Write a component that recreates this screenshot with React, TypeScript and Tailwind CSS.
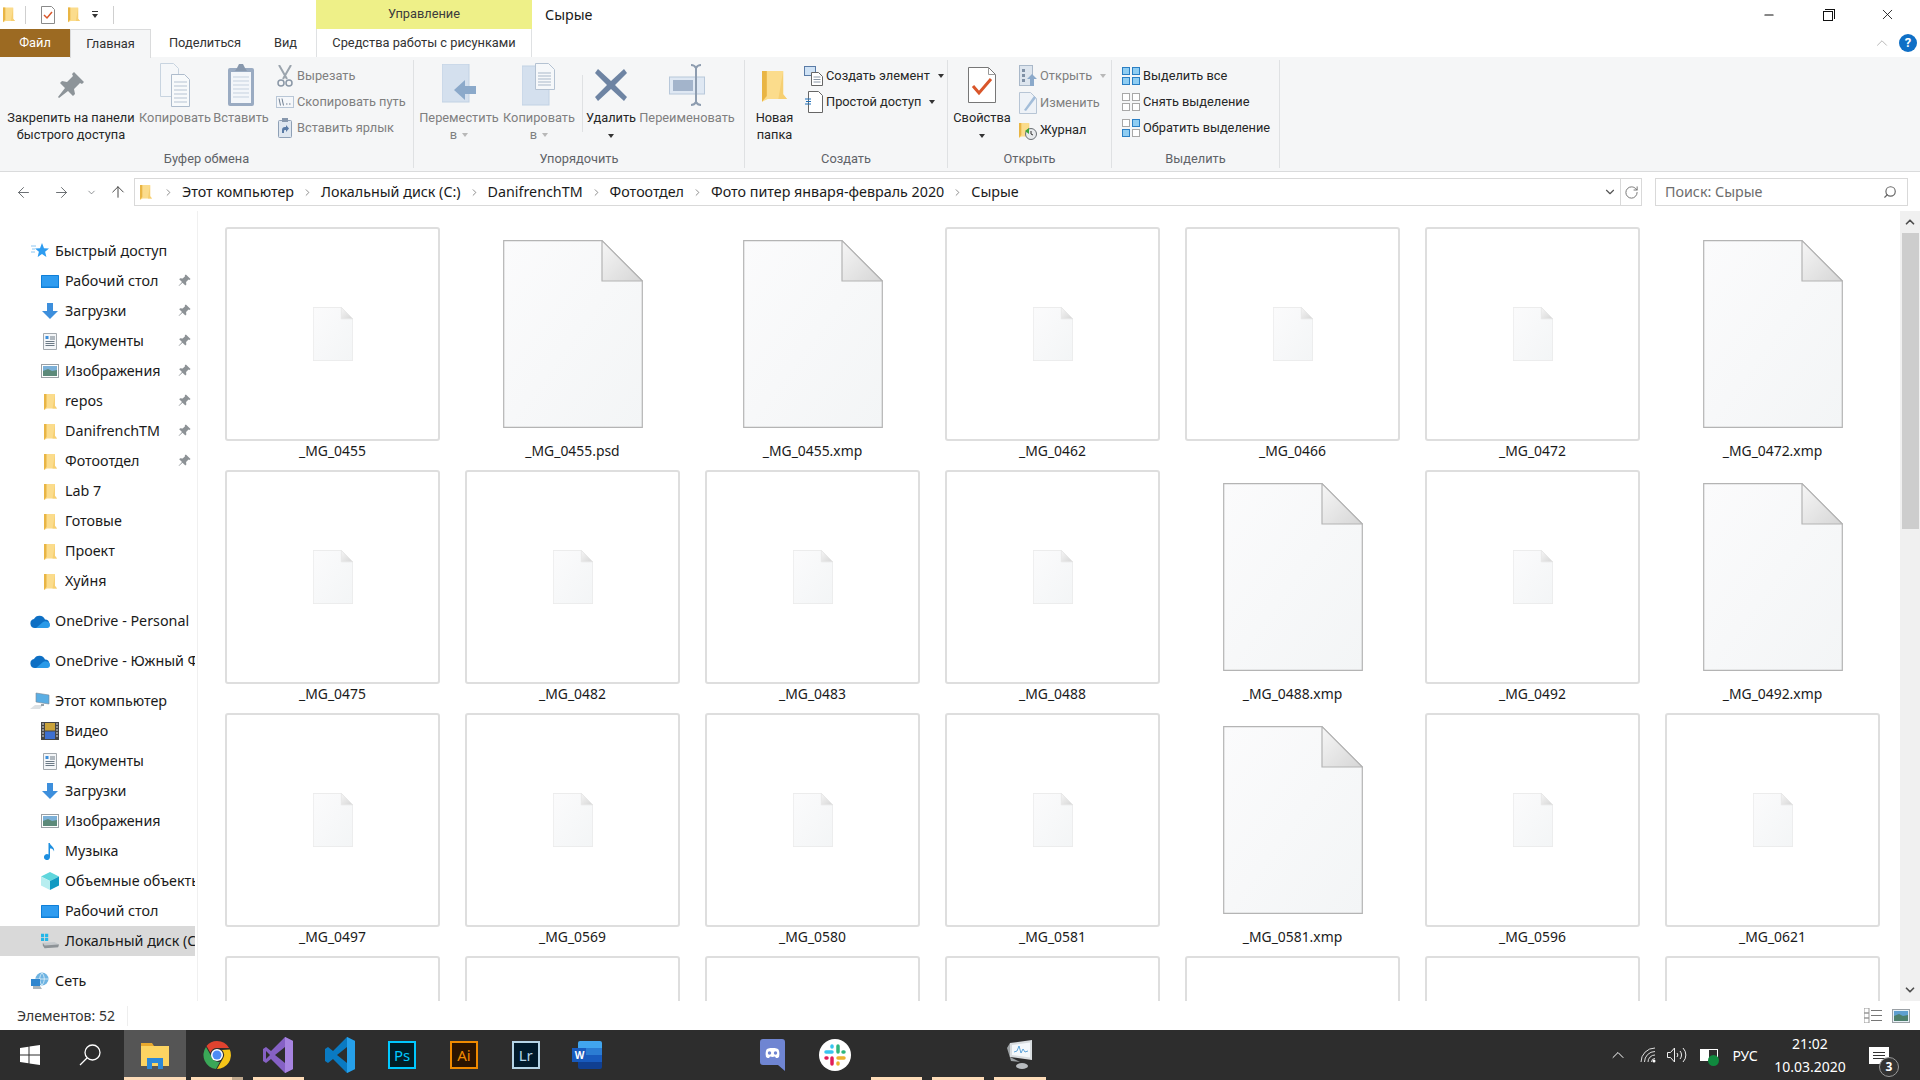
import { ArrowLeft, ArrowRight, ArrowUp, ChevronDown, ChevronRight, ChevronUp, RotateCw, Search, Minus, X } from 'lucide-react'
import type { ReactNode } from 'react'

type Tile = { name: string; big?: boolean }

const tiles: Tile[] = [
  { name: '_MG_0455' },
  { name: '_MG_0455.psd', big: true },
  { name: '_MG_0455.xmp', big: true },
  { name: '_MG_0462' },
  { name: '_MG_0466' },
  { name: '_MG_0472' },
  { name: '_MG_0472.xmp', big: true },
  { name: '_MG_0475' },
  { name: '_MG_0482' },
  { name: '_MG_0483' },
  { name: '_MG_0488' },
  { name: '_MG_0488.xmp', big: true },
  { name: '_MG_0492' },
  { name: '_MG_0492.xmp', big: true },
  { name: '_MG_0497' },
  { name: '_MG_0569' },
  { name: '_MG_0580' },
  { name: '_MG_0581' },
  { name: '_MG_0581.xmp', big: true },
  { name: '_MG_0596' },
  { name: '_MG_0621' },
  { name: '_MG_0630' },
  { name: '_MG_0631' },
  { name: '_MG_0632' },
  { name: '_MG_0633' },
  { name: '_MG_0634' },
  { name: '_MG_0635' },
  { name: '_MG_0636' },
]

function Folder({ className = 'w-[13px] h-[17px]' }: { className?: string }) {
  return (
    <svg viewBox="0 0 13 17" className={className}>
      <path d="M0 1h11v12l2 2.5H3L0 17z" fill="#fbdc8c" />
      <path d="M0 1h2.5v13L0 17z" fill="#e9b544" />
      <path d="M11 1v12l2 2.5H8.5z" fill="#f6cf72" />
    </svg>
  )
}

function PinMark() {
  return (
    <svg viewBox="0 0 14 14" className="h-[13px] w-[13px]">
      <path d="M8.5 0.5l5 5-1.2 1-1-.5-2.6 2.6.3 2.6-1.1 1.1-3-3L1 13l-.4-.4 3.7-3.9-3-3L2.4 4.6l2.6.3L7.6 2.3l-.3-.9z" fill="#8d9296" />
    </svg>
  )
}

const Desktop = () => (
  <svg viewBox="0 0 18 13" className="h-[13px] w-[18px]">
    <rect width="18" height="13" rx="0.5" fill="#0f7fd8" />
    <rect x="1" y="1" width="16" height="10.5" fill="#2f9cf0" />
  </svg>
)
const Down = () => (
  <svg viewBox="0 0 16 16" className="h-[16px] w-[16px]">
    <path d="M5 0h6v8h5l-8 8-8-8h5z" fill="#3d8fdc" />
  </svg>
)
const Doc = () => (
  <svg viewBox="0 0 14 17" className="h-[17px] w-[14px]">
    <path d="M.5.5h13v16H.5z" fill="#f4f6f8" stroke="#a3a9ae" />
    <path d="M2.5 3h3v3h-3z" fill="#3d8fdc" />
    <path d="M7 4h5M7 6h5M2.5 8.5h9M2.5 10.5h9M2.5 12.5h9" stroke="#6c7a86" />
  </svg>
)
const Pics = () => (
  <svg viewBox="0 0 18 14" className="h-[14px] w-[18px]">
    <rect x=".5" y=".5" width="17" height="13" fill="#fff" stroke="#9aa0a5" />
    <rect x="2" y="2" width="14" height="5" fill="#7bb0d8" />
    <path d="M2 7l5-2 4 2 5-1v6H2z" fill="#5d8a7a" />
  </svg>
)
const Cloud = () => (
  <svg viewBox="0 0 20 13" className="h-[13px] w-[20px]">
    <path d="M5 13a4.5 4.5 0 0 1-1-8.9A6 6 0 0 1 15 4.5 4.3 4.3 0 0 1 16 13z" fill="#0d6fc4" />
    <path d="M6 13l7-6c2-1.500 7-.5 7 3a3 3 0 0 1-3 3z" fill="#2a9ae8" />
  </svg>
)
const Pc = () => (
  <svg viewBox="0 0 20 18" className="h-[18px] w-[20px]">
    <path d="M6 1l13 2v9L6 10z" fill="#5aaee4" stroke="#7a8894" strokeWidth=".6" />
    <path d="M0 17l5-4h8l-3 4z" fill="#dde1e4" />
    <path d="M11 12h3v2h-3z" fill="#9aa4ab" />
  </svg>
)
const Video = () => (
  <svg viewBox="0 0 18 18" className="h-[18px] w-[18px]">
    <rect width="18" height="18" fill="#444" />
    <rect x="4" y="1" width="10" height="7.500" fill="#c9a23a" />
    <rect x="4" y="9.500" width="10" height="7.500" fill="#3d6fd0" />
    <path d="M1 2h2M1 5h2M1 8h2M1 11h2M1 14h2M15 2h2M15 5h2M15 8h2M15 11h2M15 14h2" stroke="#ddd" strokeWidth="1.200" />
  </svg>
)
const Music = () => (
  <svg viewBox="0 0 12 17" className="h-[17px] w-[12px]">
    <path d="M4.500 0h1.300c.5 3 5.200 4 4.200 8.500C9.500 6 7.500 5.500 6 5.500V14a3 3 0 1 1-1.500-2.500z" fill="#1d8fe0" />
  </svg>
)
const Cube = () => (
  <svg viewBox="0 0 18 18" className="h-[18px] w-[18px]">
    <path d="M9 0l9 4.500-9 4.500L0 4.500z" fill="#5fd6dc" />
    <path d="M0 4.500L9 9v9l-9-4.500z" fill="#b7eef0" />
    <path d="M18 4.500L9 9v9l9-4.500z" fill="#129ac2" />
  </svg>
)
const Disk = () => (
  <svg viewBox="0 0 20 16" className="h-[16px] w-[20px]">
    <path d="M0 0h3.500v3.500H0zM4.500 0H8v3.500H4.500zM0 4.500h3.500V8H0zM4.500 4.500H8V8H4.500z" fill="#22b6e8" />
    <path d="M2 10l13-1 5 3-1 3-15 1z" fill="#c5c9cc" />
    <path d="M2 10l2 3 15-1 1 0-1 3-15 1-2-3z" fill="#8d9296" />
  </svg>
)
const Net = () => (
  <svg viewBox="0 0 18 18" className="h-[18px] w-[18px]">
    <circle cx="11" cy="7" r="6.500" fill="#6fb4e2" />
    <path d="M5 7h12M11 1c-3 3-3 9 0 12M11 1c3 3 3 9 0 12" stroke="#e5f2fa" strokeWidth=".8" fill="none" />
    <rect x="0" y="7" width="9" height="7" fill="#2f86cf" />
    <path d="M2 14h7l2 3H2z" fill="#a9b4bb" />
  </svg>
)
const Star = () => (
  <svg viewBox="0 0 18 16" className="h-[16px] w-[18px]">
    <path d="M11 0l2 5.200 5 .3-3.900 3.300 1.300 5.200-4.400-3-4.400 3 1.300-5.200L4 5.500l5-.3z" fill="#2d9cf0" />
    <path d="M0 3h5M1 6h3M0 9h4" stroke="#8cc6f2" strokeWidth="1" />
  </svg>
)

function NavRow({ icon, label, pin, child, selected }: { icon: ReactNode; label: string; pin?: boolean; child?: boolean; selected?: boolean }) {
  return (
    <div className={`relative flex h-[30px] w-[195px] items-center overflow-hidden whitespace-nowrap text-[#1a1a1a] ${selected ? 'bg-[#d9d9d9]' : ''} ${child ? 'pl-[41px]' : 'pl-[30px]'}`}>
      <span className={`flex h-[18px] shrink-0 items-center justify-center ${child ? 'w-[18px] mr-[6px]' : 'w-[20px] mr-[5px]'}`}>{icon}</span>
      {label}
      {pin && (
        <span className="absolute right-[4px] top-[8px]">
          <PinMark />
        </span>
      )}
    </div>
  )
}

function Sidebar() {
  return (
    <aside className="w-[198px] shrink-0 overflow-hidden border-r border-[#f0f0f0] pt-[25px] text-[14.3px]">
      <NavRow icon={<Star />} label="Быстрый доступ" />
      <NavRow child pin icon={<Desktop />} label="Рабочий стол" />
      <NavRow child pin icon={<Down />} label="Загрузки" />
      <NavRow child pin icon={<Doc />} label="Документы" />
      <NavRow child pin icon={<Pics />} label="Изображения" />
      <NavRow child pin icon={<Folder />} label="repos" />
      <NavRow child pin icon={<Folder />} label="DanifrenchTM" />
      <NavRow child pin icon={<Folder />} label="Фотоотдел" />
      <NavRow child icon={<Folder />} label="Lab 7" />
      <NavRow child icon={<Folder />} label="Готовые" />
      <NavRow child icon={<Folder />} label="Проект" />
      <NavRow child icon={<Folder />} label="Хуйня" />
      <div className="mt-[10px]">
        <NavRow icon={<Cloud />} label="OneDrive - Personal" />
      </div>
      <div className="mt-[10px]">
        <NavRow icon={<Cloud />} label="OneDrive - Южный Федеральный" />
      </div>
      <div className="mt-[10px]">
        <NavRow icon={<Pc />} label="Этот компьютер" />
        <NavRow child icon={<Video />} label="Видео" />
        <NavRow child icon={<Doc />} label="Документы" />
        <NavRow child icon={<Down />} label="Загрузки" />
        <NavRow child icon={<Pics />} label="Изображения" />
        <NavRow child icon={<Music />} label="Музыка" />
        <NavRow child icon={<Cube />} label="Объемные объекты" />
        <NavRow child icon={<Desktop />} label="Рабочий стол" />
        <NavRow child selected icon={<Disk />} label="Локальный диск (C:)" />
      </div>
      <div className="mt-[10px]">
        <NavRow icon={<Net />} label="Сеть" />
      </div>
    </aside>
  )
}

function FileGlyph({ big }: { big?: boolean }) {
  const stroke = big ? '#b4b4b4' : '#e6e6e6'
  return (
    <svg viewBox="0 0 140 188" className={big ? 'h-[188px] w-[140px]' : 'h-[54px] w-[40px]'}>
      <defs>
        <linearGradient id="sheet" x1="0" y1="0" x2="1" y2="1">
          <stop offset="0" stopColor="#fbfbfc" />
          <stop offset="1" stopColor="#f3f5f6" />
        </linearGradient>
        <linearGradient id="fold" x1="0" y1="0" x2="1" y2="1">
          <stop offset="0" stopColor="#f6f6f6" />
          <stop offset="1" stopColor="#d6d6d6" />
        </linearGradient>
      </defs>
      <path d="M.7.7H99L139.300 41V187.300H.7z" fill="url(#sheet)" stroke={stroke} strokeWidth={big ? 1.2 : 3} />
      <path d="M99 .7V41H139.300z" fill="url(#fold)" stroke={stroke} strokeWidth={big ? 1.2 : 3} />
    </svg>
  )
}

function FileTile({ name, big }: Tile) {
  return (
    <div className="h-[243px] w-[215px]">
      <div className={`flex h-[214px] w-[215px] items-center justify-center rounded-[3px] ${big ? '' : 'border-2 border-[#dedede]'}`}>
        <FileGlyph big={big} />
      </div>
      <div className="text-center text-[13.9px] leading-[20px] text-[#1a1a1a]">{name}</div>
    </div>
  )
}

function Scrollbar() {
  return (
    <div className="flex w-[20px] shrink-0 flex-col bg-[#f0f0f0]">
      <div className="flex h-[22px] items-center justify-center text-[#505050]">
        <ChevronUp size={14} strokeWidth={3} />
      </div>
      <div className="h-[296px] w-[17px] self-center bg-[#cdcdcd]" />
      <div className="flex-1" />
      <div className="flex h-[22px] items-center justify-center text-[#505050]">
        <ChevronDown size={14} strokeWidth={3} />
      </div>
    </div>
  )
}

function Caret({ muted, className = '' }: { muted?: boolean; className?: string }) {
  return <span className={`inline-block h-0 w-0 border-x-[3.500px] border-t-[4px] border-x-transparent ${muted ? 'border-t-[#b8b8b8]' : 'border-t-[#333]'} ${className}`} />
}

function BigBtn({ w, icon, lines, muted, arrow, inlineArrow }: { w: string; icon: ReactNode; lines: string[]; muted?: boolean; arrow?: boolean; inlineArrow?: boolean }) {
  return (
    <div className={`${w} flex shrink-0 flex-col items-center pt-[4px] leading-[17px] ${muted ? 'text-[#7f7f7f]' : 'text-[#262626]'}`}>
      <div className="flex h-[48px] shrink-0 items-center justify-center">{icon}</div>
      {lines.map((l, i) => (
        <div key={l} className="flex items-center whitespace-nowrap">
          {l}
          {inlineArrow && i === lines.length - 1 && <Caret muted={muted} className="ml-[5px]" />}
        </div>
      ))}
      {arrow && <Caret muted={muted} className="mt-[8px]" />}
    </div>
  )
}

function SmallRow({ icon, label, muted, caret, h = 'h-[26px]' }: { icon: ReactNode; label: string; muted?: boolean; caret?: boolean; h?: string }) {
  return (
    <div className={`flex ${h} items-center gap-[3px] whitespace-nowrap ${muted ? 'text-[#7f7f7f]' : 'text-[#262626]'}`}>
      <span className="flex h-[22px] w-[19px] shrink-0 items-center justify-center">{icon}</span>
      {label}
      {caret && <Caret muted={muted} className="ml-[5px]" />}
    </div>
  )
}

function Group({ w, label, children }: { w: string; label: string; children: ReactNode }) {
  return (
    <section className={`${w} my-[3px] flex shrink-0 flex-col border-r border-[#dfe1e3]`}>
      <div className="-mt-[3px] flex h-[95px]">{children}</div>
      <div className="text-center leading-[18px] text-[#5f6368]">{label}</div>
    </section>
  )
}

const SelectGrid = ({ on }: { on: boolean[] }) => (
  <svg viewBox="0 0 18 18" className="h-[18px] w-[18px]">
    {[
      [0, 0],
      [10, 0],
      [0, 10],
      [10, 10],
    ].map(([x, y], i) => (
      <rect key={i} x={x + 0.5} y={y + 0.5} width="7" height="7" fill={on[i] ? '#8fcdf2' : '#fff'} stroke={on[i] ? '#2a7fc4' : '#a8a8a8'} />
    ))}
  </svg>
)

function Ribbon() {
  return (
    <div className="flex h-[115px] border-b border-[#dadbdc] bg-[#f5f6f7] font-['Roboto',sans-serif] text-[12.8px]">
      <Group w="w-[414px]" label="Буфер обмена">
        <div className="w-[7px] shrink-0" />
        <BigBtn
          w="w-[128px]"
          lines={['Закрепить на панели', 'быстрого доступа']}
          icon={
            <svg viewBox="0 0 26 26" className="h-[26px] w-[26px]">
              <path d="M16 0l10 10-2 2-2-1-6 6 1 5-2 2-5-5-9 7-1-1 7-9-5-5 2-2 5 1 6-6-1-2z" fill="#8d9499" />
            </svg>
          }
        />
        <BigBtn
          muted
          w="w-[80px]"
          lines={['Копировать']}
          icon={
            <svg viewBox="0 0 30 44" className="h-[44px] w-[30px]">
              <path d="M.5.5h13l5 5v28H.5z" fill="#f5f7f9" stroke="#c8d4e0" />
              <path d="M11.500 11.500h13l5 5v27h-18z" fill="#f8fafb" stroke="#aebccc" />
              <path d="M14 19h13M14 23h13M14 27h13M14 31h13M14 35h13M14 39h13" stroke="#b6c3d2" />
            </svg>
          }
        />
        <BigBtn
          muted
          w="w-[52px]"
          lines={['Вставить']}
          icon={
            <svg viewBox="0 0 28 44" className="h-[44px] w-[28px]">
              <rect x="1" y="5" width="26" height="38" rx="2" fill="#9aabc2" />
              <rect x="4" y="9" width="20" height="31" fill="#f3f6fa" />
              <path d="M6 14h16M6 18h16M6 22h16M6 26h16M6 30h16M6 34h16" stroke="#c5d1df" />
              <path d="M10 5l2-4h4l2 4 2 3H8z" fill="#8898ad" />
            </svg>
          }
        />
        <div className="ml-[8px] flex flex-col pt-[6px]">
          <SmallRow
            muted
            label="Вырезать"
            icon={
              <svg viewBox="0 0 16 22" className="h-[22px] w-[16px]">
                <path d="M2 0l8 14M14 0L6 14" stroke="#9ba4ad" strokeWidth="2" />
                <circle cx="4" cy="18" r="3" fill="none" stroke="#8a97a6" strokeWidth="1.500" />
                <circle cx="12" cy="18" r="3" fill="none" stroke="#8a97a6" strokeWidth="1.500" />
              </svg>
            }
          />
          <SmallRow
            muted
            label="Скопировать путь"
            icon={
              <svg viewBox="0 0 18 12" className="h-[12px] w-[18px]">
                <rect x=".5" y=".5" width="17" height="11" fill="#f5f7fa" stroke="#b8c6d6" />
                <path d="M3 2.500l1.500 7M6 2.500l1.500 7M10 8h1.500M13 8h1.500" stroke="#6f7f92" strokeWidth="1" />
              </svg>
            }
          />
          <SmallRow
            muted
            label="Вставить ярлык"
            icon={
              <svg viewBox="0 0 14 20" className="h-[20px] w-[14px]">
                <rect x=".5" y="2.500" width="13" height="17" rx="1" fill="#dfe7f0" stroke="#8ea0b6" />
                <rect x="4" y="0" width="6" height="4" fill="#8898ad" />
                <path d="M4 15v-3a3 3 0 0 1 3-3h1V7l3 3.500L8 14v-2H7a1 1 0 0 0-1 1v2z" fill="#5a7ba6" />
              </svg>
            }
          />
        </div>
      </Group>
      <Group w="w-[331px]" label="Упорядочить">
        <BigBtn
          muted
          inlineArrow
          w="w-[90px]"
          lines={['Переместить', 'в']}
          icon={
            <svg viewBox="0 0 34 42" className="h-[42px] w-[34px]">
              <rect x="0" y="0" width="27" height="38" fill="#d4e0ee" stroke="#c2d2e4" />
              <path d="M12 26l11-10v6h11v8H23v6z" fill="#8ba9ca" />
            </svg>
          }
        />
        <BigBtn
          muted
          inlineArrow
          w="w-[70px]"
          lines={['Копировать', 'в']}
          icon={
            <svg viewBox="0 0 34 44" className="h-[44px] w-[34px]">
              <rect x="0" y="3" width="27" height="39" fill="#d4e0ee" stroke="#c2d2e4" />
              <path d="M13.500.5h13l6 6v20h-19z" fill="#f6f8fa" stroke="#b4c2d2" />
              <path d="M16 10h13M16 13h13M16 16h13M16 19h13M16 22h13" stroke="#a9b8c9" />
            </svg>
          }
        />
        <div className="my-[18px] ml-[8px] w-px bg-[#dfe1e3]" />
        <BigBtn
          arrow
          w="w-[56px]"
          lines={['Удалить']}
          icon={
            <svg viewBox="0 0 32 32" className="h-[32px] w-[32px]">
              <path d="M3 0l13 12L29 0l3 4-12 12 12 12-3 4-13-12L3 32l-3-4 12-12L0 4z" fill="#6e84a3" />
            </svg>
          }
        />
        <BigBtn
          muted
          w="w-[96px]"
          lines={['Переименовать']}
          icon={
            <svg viewBox="0 0 36 42" className="h-[42px] w-[36px]">
              <rect x=".5" y="13" width="35" height="17" fill="#dfe8f3" stroke="#b8c8da" />
              <rect x="4" y="16" width="20" height="11" fill="#a3b4cb" />
              <path d="M22 1c3 0 4 1 5 3 1-2 2-3 5-3M27 4v34M22 41c3 0 4-1 5-3 1 2 2 3 5 3" fill="none" stroke="#8d9caf" strokeWidth="2" />
            </svg>
          }
        />
      </Group>
      <Group w="w-[203px]" label="Создать">
        <BigBtn w="w-[59px]" lines={['Новая', 'папка']} icon={<Folder className="h-[43px] w-[25px]" />} />
        <div className="flex flex-col pt-[6px]">
          <SmallRow
            caret
            label="Создать элемент"
            icon={
              <svg viewBox="0 0 19 20" className="h-[20px] w-[19px]">
                <rect x=".5" y=".5" width="11" height="9" fill="#cfe2f5" stroke="#5a7ba6" />
                <path d="M7.500 6.500h7l4 4v9h-11z" fill="#fff" stroke="#666" />
                <path d="M9.500 11h7M9.500 13.500h7M9.500 16h7" stroke="#8a97a6" />
              </svg>
            }
          />
          <SmallRow
            caret
            label="Простой доступ"
            icon={
              <svg viewBox="0 0 18 22" className="h-[22px] w-[18px]">
                <path d="M3.500.5h10l4 4v17h-14z" fill="#fff" stroke="#666" />
                <path d="M0 8h6M1 10.500h5M0 13h6" stroke="#1f6fb8" strokeWidth="1.200" />
              </svg>
            }
          />
        </div>
      </Group>
      <Group w="w-[164px]" label="Открыть">
        <BigBtn
          arrow
          w="w-[68px]"
          lines={['Свойства']}
          icon={
            <svg viewBox="0 0 28 36" className="h-[36px] w-[28px]">
              <path d="M.5.5h20l7 7v28H.5z" fill="#fff" stroke="#777" />
              <path d="M20.500.5v7h7" fill="none" stroke="#999" />
              <path d="M5 19l6 7L23 12" fill="none" stroke="#d9562a" strokeWidth="3" />
            </svg>
          }
        />
        <div className="ml-[2px] flex flex-col pt-[6px]">
          <SmallRow
            muted
            caret
            label="Открыть"
            icon={
              <svg viewBox="0 0 18 22" className="h-[22px] w-[18px]">
                <rect x=".5" y=".5" width="13" height="20" fill="#dde5ee" stroke="#a9b8c9" />
                <path d="M3 4h3v3H3zM3 9h3v3H3zM3 14h3v3H3z" fill="#7f90a5" />
                <path d="M8 14l5-5 5 5h-3v7h-4v-7z" fill="#8ba9ca" />
              </svg>
            }
          />
          <SmallRow
            muted
            h="h-[28px]"
            label="Изменить"
            icon={
              <svg viewBox="0 0 18 22" className="h-[22px] w-[18px]">
                <path d="M.5.5h11l6 6v15H.5z" fill="#eef2f7" stroke="#b7c5d5" />
                <path d="M5 18l10-14 2 2L7 19z" fill="#a3bdd9" />
              </svg>
            }
          />
          <SmallRow
            label="Журнал"
            icon={
              <span className="relative flex h-[20px] w-[18px]">
                <Folder className="h-[20px] w-[12px]" />
                <svg viewBox="0 0 12 12" className="absolute bottom-0 right-0 h-[12px] w-[12px]">
                  <circle cx="6" cy="6" r="5.500" fill="#e8eaec" stroke="#6a6f74" />
                  <path d="M6 3v3l2 1" stroke="#333" fill="none" />
                  <path d="M0 3l4-3v6z" fill="#3aa53a" />
                </svg>
              </span>
            }
          />
        </div>
      </Group>
      <Group w="w-[168px]" label="Выделить">
        <div className="ml-[9px] flex flex-col pt-[6px]">
          <SmallRow label="Выделить все" icon={<SelectGrid on={[true, true, true, true]} />} />
          <SmallRow label="Снять выделение" icon={<SelectGrid on={[false, false, false, false]} />} />
          <SmallRow label="Обратить выделение" icon={<SelectGrid on={[false, true, true, false]} />} />
        </div>
      </Group>
    </div>
  )
}

function TitleBar() {
  return (
    <div className="relative z-10 flex h-[29px] items-center bg-white">
      <div className="flex w-[316px] items-center">
        <Folder className="ml-[3px] h-[17px] w-[12px]" />
        <span className="ml-[10px] h-[18px] w-px bg-[#cfcfcf]" />
        <svg viewBox="0 0 14 18" className="ml-[15px] h-[18px] w-[14px]">
          <path d="M.5.5h10l3 3v14H.5z" fill="#fff" stroke="#8a8a8a" />
          <path d="M3 9l3 3 5-6" fill="none" stroke="#d9562a" strokeWidth="1.500" />
        </svg>
        <Folder className="ml-[13px] h-[17px] w-[12px]" />
        <span className="ml-[12px] flex flex-col items-center gap-[2px]">
          <span className="h-px w-[6px] bg-[#333]" />
          <span className="h-0 w-0 border-x-[3.500px] border-t-[4px] border-x-transparent border-t-[#333]" />
        </span>
        <span className="ml-[15px] h-[18px] w-px bg-[#cfcfcf]" />
      </div>
      <div className="flex h-[29px] w-[216px] items-center justify-center bg-[#eef088] pb-[2px] font-['Roboto',sans-serif] text-[12.8px] text-[#3c3c3c]">Управление</div>
      <div className="ml-[13px] text-[14.3px] text-[#1a1a1a]">Сырые</div>
      <div className="ml-auto flex items-center text-[#111]">
        <span className="flex w-[59px] justify-center">
          <Minus size={14} strokeWidth={2} />
        </span>
        <span className="relative flex w-[59px] justify-center">
          <span className="mt-[2px] h-[10px] w-[10px] border border-[#111] bg-white" />
          <span className="absolute left-[27px] top-0 h-[10px] w-[10px] border-r border-t border-[#111]" />
        </span>
        <span className="mr-[2px] flex w-[61px] justify-center">
          <X size={17} strokeWidth={1.200} />
        </span>
      </div>
    </div>
  )
}

function TabStrip() {
  return (
    <div className="relative flex h-[28px] items-stretch bg-white font-['Roboto',sans-serif] text-[12.8px] text-[#333]">
      <div className="flex w-[70px] items-center justify-center bg-[#9c6a22] text-white">Файл</div>
      <div className="relative z-10 -mb-px flex w-[81px] items-center justify-center border-x border-t border-[#dadbdc] bg-[#f5f6f7]">Главная</div>
      <div className="ml-[19px] flex w-[70px] items-center justify-center">Поделиться</div>
      <div className="ml-[35px] flex w-[21px] items-center justify-center">Вид</div>
      <div className="ml-[20px] flex w-[216px] items-center justify-center border-x border-[#dfe1e3]">Средства работы с рисунками</div>
      <div className="ml-auto flex items-center">
        <ChevronUp size={18} strokeWidth={1} className="mr-[8px] text-[#a0a0a0]" />
        <span className="mr-[3px] flex h-[18px] w-[18px] items-center justify-center rounded-full bg-[#0f6fc6] text-[13px] font-bold text-white">?</span>
      </div>
    </div>
  )
}

function Crumb({ label, first }: { label: string; first?: boolean }) {
  return (
    <>
      <ChevronRight size={11} strokeWidth={1.800} className={`text-[#777] ${first ? '' : 'mx-[8px]'}`} />
      <span className={first ? 'ml-[8px]' : ''}>{label}</span>
    </>
  )
}

function AddressBar() {
  return (
    <div className="flex h-[34px] items-start pt-[6px] text-[14.3px]">
      <div className="flex h-[28px] w-[134px] items-center text-[#5f6368]">
        <ArrowLeft size={17} strokeWidth={1.300} className="ml-[15px]" />
        <ArrowRight size={17} strokeWidth={1.300} className="ml-[21px]" />
        <ChevronDown size={11} strokeWidth={1.500} className="ml-[16px]" />
        <ArrowUp size={18} strokeWidth={1.300} className="ml-[12px] text-[#444]" />
      </div>
      <div className="flex h-[28px] w-[1508px] items-center border border-[#d9d9d9] text-[#1a1a1a]">
        <Folder className="ml-[5px] mr-[11px] h-[16px] w-[12px]" />
        <Crumb first label="Этот компьютер" />
        <Crumb label="Локальный диск (C:)" />
        <Crumb label="DanifrenchTM" />
        <Crumb label="Фотоотдел" />
        <Crumb label="Фото питер января-февраль 2020" />
        <Crumb label="Сырые" />
        <ChevronDown size={14} strokeWidth={2} className="ml-auto mr-[3px] text-[#555]" />
        <span className="flex h-full w-[21px] items-center justify-center border-l border-[#d9d9d9] text-[#777]">
          <RotateCw size={15} strokeWidth={1.600} />
        </span>
      </div>
      <div className="ml-[13px] flex h-[28px] w-[253px] items-center justify-between border border-[#d9d9d9] pl-[9px] pr-[10px] text-[#6d6d6d]">
        Поиск: Сырые
        <Search size={14} strokeWidth={2} className="-scale-x-100 text-[#666]" />
      </div>
    </div>
  )
}

function StatusBar() {
  return (
    <div className="flex h-[29px] items-center bg-white text-[14px] text-[#333]">
      <span className="ml-[17px] pr-[12px]">Элементов: 52</span>
      <span className="h-[20px] w-px bg-[#eeeeee]" />
      <div className="ml-auto mr-[10px] flex items-center gap-[10px]">
        <svg viewBox="0 0 18 15" className="h-[15px] w-[18px]">
          <path d="M0 0h5v5H0zM0 5h5v5H0zM0 10h5v5H0z" fill="#fff" stroke="#999" />
          <path d="M7 2.500h11M7 7.500h11M7 12.500h11" stroke="#777" />
        </svg>
        <svg viewBox="0 0 18 14" className="h-[14px] w-[18px]">
          <rect x=".5" y=".5" width="17" height="13" fill="#e7f0f7" stroke="#9aa0a5" />
          <rect x="2" y="2" width="14" height="5" fill="#5e9fd0" />
          <path d="M2 7l5-2 4 2 5-1v6H2z" fill="#4d7f6c" />
        </svg>
      </div>
    </div>
  )
}

function Badge({ label, bg, border, color }: { label: string; bg: string; border: string; color: string }) {
  return <span className={`flex h-[28px] w-[28px] items-center justify-center border-2 text-[15px] ${bg} ${border} ${color}`}>{label}</span>
}

function Slot({ children, active, bar, tail }: { children?: ReactNode; active?: boolean; bar?: boolean; tail?: boolean }) {
  return (
    <div className={`relative flex h-[50px] w-[61.8px] items-center justify-center ${active ? 'bg-[#555555]' : ''}`}>
      {children}
      {bar && (
        <span className={`absolute bottom-0 flex h-[3px] ${active ? 'inset-x-0' : 'inset-x-[5px]'} bg-[#fddcb8]`}>
          {tail && <span className="ml-auto h-full w-[11px] bg-[#c0a98e]" />}
        </span>
      )}
    </div>
  )
}

function Taskbar() {
  return (
    <div className="flex h-[50px] items-center bg-[#2d2d2d] text-white">
      <div className="flex w-[60px] justify-center">
        <svg viewBox="0 0 20 20" className="h-[20px] w-[20px]">
          <path d="M0 3l8.500-1.200v7.700H0zM9.500 1.600L20 0v9.500H9.500zM0 10.500h8.500v7.700L0 17zM9.500 10.500H20V20L9.500 18.400z" fill="#fff" />
        </svg>
      </div>
      <div className="mr-[4px] flex w-[60px] justify-center">
        <svg viewBox="0 0 22 22" className="h-[22px] w-[22px]" fill="none" stroke="#fff" strokeWidth="1.300">
          <circle cx="13.500" cy="8.500" r="7.500" />
          <path d="M8 14l-7 7" />
        </svg>
      </div>
      <Slot active bar>
        <svg viewBox="0 0 28 28" className="h-[28px] w-[28px]">
          <path d="M0 2h11l2 3h-13z" fill="#e8a92e" />
          <rect y="5" width="28" height="20" fill="#fcd462" />
          <path d="M6 28V17h16v11h-5v-6h-6v6z" fill="#2b88d8" />
        </svg>
      </Slot>
      <Slot bar tail>
        <svg viewBox="0 0 28 28" className="h-[28px] w-[28px]">
          <path d="M14 0a14 14 0 0 1 12.100 7H14a7 7 0 0 0-6.600 4.800L3.500 5A14 14 0 0 1 14 0z" fill="#e0432f" />
          <path d="M26.800 8.500A14 14 0 0 1 14 28l6-10.500A7 7 0 0 0 19 9z" fill="#f5c518" />
          <path d="M3 6l6 10.500a7 7 0 0 0 8 4.200L13 28A14 14 0 0 1 3 6z" fill="#3aa757" />
          <circle cx="14" cy="14" r="6" fill="#fff" />
          <circle cx="14" cy="14" r="4.500" fill="#4c8bf5" />
        </svg>
      </Slot>
      <Slot bar>
        <svg viewBox="0 0 30 36" className="h-[36px] w-[30px]">
          <path d="M22 0l8 4v28l-8 4-14-14-5 4-3-2V12l3-2 5 4z" fill="#8661c5" />
          <path d="M22 10v16l-10-8z" fill="#2d2d2d" />
          <path d="M3 14v8l4-4z" fill="#2d2d2d" />
          <path d="M22 0l8 4v28l-8 4z" fill="#a784e0" />
        </svg>
      </Slot>
      <Slot>
        <svg viewBox="0 0 30 36" className="h-[36px] w-[30px]">
          <path d="M22 0l8 4v28l-8 4-14-14-5 4-3-2V12l3-2 5 4z" fill="#0a7ac2" />
          <path d="M22 10v16l-10-8z" fill="#2d2d2d" />
          <path d="M22 0l8 4v28l-8 4z" fill="#26a0ea" />
        </svg>
      </Slot>
      <Slot>
        <Badge label="Ps" bg="bg-[#001d26]" border="border-[#00c8ff]" color="text-[#00c8ff]" />
      </Slot>
      <Slot>
        <Badge label="Ai" bg="bg-[#2b1400]" border="border-[#f08a00]" color="text-[#f08a00]" />
      </Slot>
      <Slot>
        <Badge label="Lr" bg="bg-[#001a2b]" border="border-[#b4d4e6]" color="text-[#b4d4e6]" />
      </Slot>
      <Slot>
        <span className="relative flex h-[28px] w-[30px] justify-end">
          <span className="flex h-[28px] w-[24px] flex-col overflow-hidden rounded-[2px]">
            <span className="h-1/4 bg-[#41a5ee]" />
            <span className="h-1/4 bg-[#2b7cd3]" />
            <span className="h-1/4 bg-[#185abd]" />
            <span className="h-1/4 bg-[#103f91]" />
          </span>
          <span className="absolute left-0 top-[7px] flex h-[14px] w-[14px] items-center justify-center bg-[#185abd] text-[10px] font-bold">W</span>
        </span>
      </Slot>
      <Slot />
      <Slot />
      <Slot>
        <svg viewBox="0 0 25 32" className="h-[32px] w-[25px]">
          <path d="M3 0h19a3 3 0 0 1 3 3v29l-7-6H3a3 3 0 0 1-3-3V3a3 3 0 0 1 3-3z" fill="#6f85d2" />
          <path d="M6 18c-1-4 0-7 1-8 2-1 3-1 4-1h3c1 0 2 0 4 1 1 1 2 4 1 8-1 1-2 1-3 1l-1-1.500c-2 .5-3 .5-5 0L9 19c-1 0-2 0-3-1z" fill="#fff" />
          <circle cx="9.500" cy="14" r="1.700" fill="#6f85d2" />
          <circle cx="15.500" cy="14" r="1.700" fill="#6f85d2" />
        </svg>
      </Slot>
      <Slot>
        <span className="flex h-[32px] w-[32px] items-center justify-center rounded-full bg-white">
          <svg viewBox="0 0 22 22" className="h-[22px] w-[22px]" strokeWidth="3.500" strokeLinecap="round">
            <path d="M2 8h6" stroke="#36c5f0" />
            <path d="M8 2v1" stroke="#36c5f0" />
            <path d="M14 2v6" stroke="#2eb67d" />
            <path d="M20 8h-1" stroke="#2eb67d" />
            <path d="M14 14h6" stroke="#ecb22e" />
            <path d="M14 20v-1" stroke="#ecb22e" />
            <path d="M8 14v6" stroke="#e01e5a" />
            <path d="M2 14h1" stroke="#e01e5a" />
          </svg>
        </span>
      </Slot>
      <Slot bar />
      <Slot bar />
      <Slot bar>
        <svg viewBox="0 0 28 30" className="h-[30px] w-[28px]">
          <path d="M4 3l22-3v20L4 17z" fill="#d8dcdf" />
          <path d="M6 5l18-2.500v15L6 15z" fill="#f4f8fb" />
          <path d="M8 12l3-1 2-5 2 7 2-4 2 3 3-1" fill="none" stroke="#3a8fd0" strokeWidth=".8" />
          <path d="M1 8l3-5v14l10 5-9-1z" fill="#9ea3a6" />
          <ellipse cx="16" cy="26" rx="6" ry="3" fill="#b8bcbf" />
        </svg>
      </Slot>
      <div className="relative ml-auto flex h-full items-center">
        <ChevronUp size={20} strokeWidth={1.200} className="mr-[12px]" />
        <svg viewBox="0 0 16 16" className="mr-[11px] h-[16px] w-[16px]" fill="none" stroke="#ddd" strokeWidth="1">
          <path d="M1 15A14 14 0 0 1 15 1M4.500 15A10.500 10.500 0 0 1 15 4.500M8 15a7 7 0 0 1 7-7M11.500 15A3.500 3.500 0 0 1 15 11.500" />
          <circle cx="14" cy="14" r="1.500" fill="#fff" stroke="none" />
        </svg>
        <svg viewBox="0 0 20 16" className="mr-[13px] h-[16px] w-[20px]" fill="none" stroke="#eee" strokeWidth="1">
          <path d="M.5 5.500h3l4-4.500v14l-4-4.500h-3z" />
          <path d="M10 6a3 3 0 0 1 0 4M13 4a6 6 0 0 1 0 8M16 1a10 10 0 0 1 0 14" />
        </svg>
        <span className="relative mr-[11px] h-[12px] w-[18px] border border-white bg-transparent">
          <span className="block h-full w-[8px] bg-white" />
          <span className="absolute -bottom-[6px] -right-[2px] h-[11px] w-[11px] rounded-full bg-[#10893e]" />
        </span>
        <span className="mr-[14px] w-[32px] text-center text-[14px]">РУС</span>
        <div className="mr-[24px] flex w-[70px] flex-col items-center text-[14px] leading-[23px]">
          <span>21:02</span>
          <span>10.03.2020</span>
        </div>
        <span className="relative mr-[31px] flex h-[17px] w-[20px] flex-col justify-center gap-[2px] bg-white px-[4px]">
          <span className="h-px bg-[#333]" />
          <span className="h-px bg-[#333]" />
          <span className="h-px bg-[#333]" />
          <span className="absolute -bottom-[13px] -right-[10px] flex h-[20px] w-[20px] items-center justify-center rounded-full border border-[#999] bg-[#333] text-[12px] font-bold">3</span>
        </span>
      </div>
    </div>
  )
}

export default function App() {
  return (
    <div className="flex h-[1080px] w-[1920px] flex-col overflow-hidden bg-white font-['Noto_Sans',sans-serif]">
      <TitleBar />
      <TabStrip />
      <Ribbon />
      <AddressBar />
      <div className="flex min-h-0 flex-1 pt-[5px]">
        <Sidebar />
        <main className="min-w-0 flex-1 overflow-hidden pl-[27px] pt-[16px]">
          <div className="grid grid-cols-[repeat(7,215px)] gap-x-[25px]">
            {tiles.map((t) => (
              <FileTile key={t.name} {...t} />
            ))}
          </div>
        </main>
        <Scrollbar />
      </div>
      <StatusBar />
      <Taskbar />
    </div>
  )
}
